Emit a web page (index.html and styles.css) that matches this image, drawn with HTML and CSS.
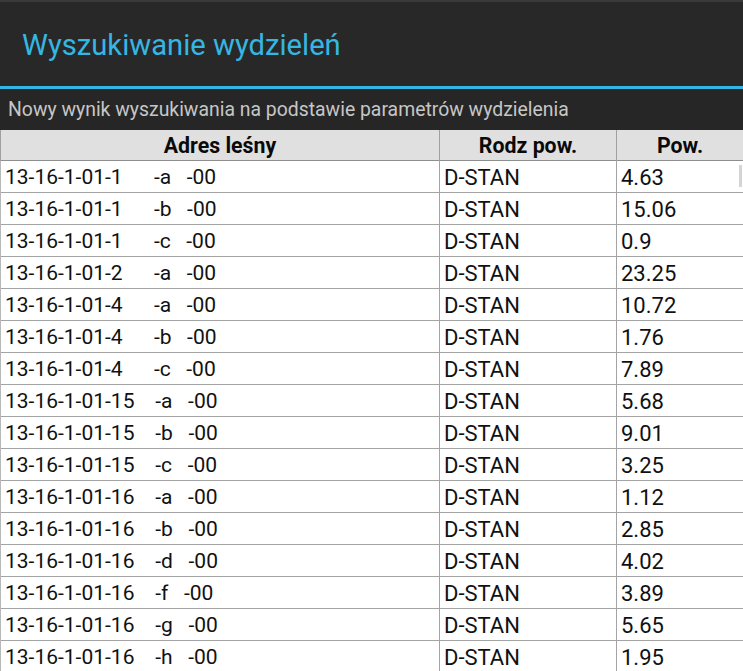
FILE: index.html
```html
<!DOCTYPE html>
<html lang="pl">
<head>
<meta charset="utf-8">
<title>Wyszukiwanie wydzieleń</title>
<link rel="stylesheet" href="styles.css">
</head>
<body>
<div class="app">
  <header class="actionbar">
    <h1 class="title">Wyszukiwanie wydzieleń</h1>
  </header>
  <div class="accent"></div>
  <div class="subtitle">Nowy wynik wyszukiwania na podstawie parametrów wydzielenia</div>
  <div class="table">
    <div class="row head">
      <div class="cell c1">Adres leśny</div>
      <div class="cell c2">Rodz pow.</div>
      <div class="cell c3">Pow.</div>
    </div>
    <div class="row"><div class="cell c1">13-16-1-01-1      -a   -00</div><div class="cell c2">D-STAN</div><div class="cell c3">4.63</div></div>
    <div class="row"><div class="cell c1">13-16-1-01-1      -b   -00</div><div class="cell c2">D-STAN</div><div class="cell c3">15.06</div></div>
    <div class="row"><div class="cell c1">13-16-1-01-1      -c   -00</div><div class="cell c2">D-STAN</div><div class="cell c3">0.9</div></div>
    <div class="row"><div class="cell c1">13-16-1-01-2      -a   -00</div><div class="cell c2">D-STAN</div><div class="cell c3">23.25</div></div>
    <div class="row"><div class="cell c1">13-16-1-01-4      -a   -00</div><div class="cell c2">D-STAN</div><div class="cell c3">10.72</div></div>
    <div class="row"><div class="cell c1">13-16-1-01-4      -b   -00</div><div class="cell c2">D-STAN</div><div class="cell c3">1.76</div></div>
    <div class="row"><div class="cell c1">13-16-1-01-4      -c   -00</div><div class="cell c2">D-STAN</div><div class="cell c3">7.89</div></div>
    <div class="row"><div class="cell c1">13-16-1-01-15    -a   -00</div><div class="cell c2">D-STAN</div><div class="cell c3">5.68</div></div>
    <div class="row"><div class="cell c1">13-16-1-01-15    -b   -00</div><div class="cell c2">D-STAN</div><div class="cell c3">9.01</div></div>
    <div class="row"><div class="cell c1">13-16-1-01-15    -c   -00</div><div class="cell c2">D-STAN</div><div class="cell c3">3.25</div></div>
    <div class="row"><div class="cell c1">13-16-1-01-16    -a   -00</div><div class="cell c2">D-STAN</div><div class="cell c3">1.12</div></div>
    <div class="row"><div class="cell c1">13-16-1-01-16    -b   -00</div><div class="cell c2">D-STAN</div><div class="cell c3">2.85</div></div>
    <div class="row"><div class="cell c1">13-16-1-01-16    -d   -00</div><div class="cell c2">D-STAN</div><div class="cell c3">4.02</div></div>
    <div class="row"><div class="cell c1">13-16-1-01-16    -f   -00</div><div class="cell c2">D-STAN</div><div class="cell c3">3.89</div></div>
    <div class="row"><div class="cell c1">13-16-1-01-16    -g   -00</div><div class="cell c2">D-STAN</div><div class="cell c3">5.65</div></div>
    <div class="row"><div class="cell c1">13-16-1-01-16    -h   -00</div><div class="cell c2">D-STAN</div><div class="cell c3">1.95</div></div>
    <div class="scrollbar"></div>
  </div>
</div>
</body>
</html>
```

FILE: styles.css
```css
html, body {
  margin: 0;
  padding: 0;
  background: #ffffff;
}
body {
  font-family: Roboto, "Liberation Sans", sans-serif;
  width: 743px;
  height: 671px;
  overflow: hidden;
}
.app {
  display: flex;
  flex-direction: column;
}
.actionbar {
  height: 86px;
  background: #282828;
  border-top: 2px solid #3a3a3a;
  box-sizing: border-box;
  display: flex;
  align-items: center;
  padding-left: 22px;
}
.title {
  margin: 0;
  padding-top: 2px;
  font-weight: 400;
  font-size: 29.2px;
  color: #35b6e3;
}
.accent {
  height: 3px;
  background: #33b5e5;
}
.subtitle {
  height: 41px;
  background: #262626;
  color: #c6c6c6;
  font-size: 19.4px;
  line-height: 41px;
  padding-left: 8px;
  white-space: nowrap;
}
.table {
  position: relative;
  display: flex;
  flex-direction: column;
}
.row {
  display: grid;
  grid-template-columns: 439px 177px 1fr;
  height: 32px;
  border-bottom: 1px solid #a4a4a4;
  box-sizing: border-box;
}
.row.head {
  height: 31px;
  background: #e0e0e0;
  border-bottom: 1px solid #8e8e8e;
}
.cell {
  border-left: 1px solid #a4a4a4;
  box-sizing: border-box;
  font-size: 22px;
  color: #111111;
  padding-left: 4px;
  line-height: 33px;
  white-space: pre;
}
.row .c1 {
  border-left-color: #b8b8b8;
  font-size: 21px;
}
.head .cell {
  font-weight: 700;
  text-align: center;
  padding-left: 0;
  font-size: 21.3px;
  line-height: 32px;
  color: #0a0a0a;
  border-left-color: #a0a0a0;
}
.scrollbar {
  position: absolute;
  right: 1px;
  top: 35px;
  width: 3px;
  height: 22px;
  background: #d4d4d4;
}
```
